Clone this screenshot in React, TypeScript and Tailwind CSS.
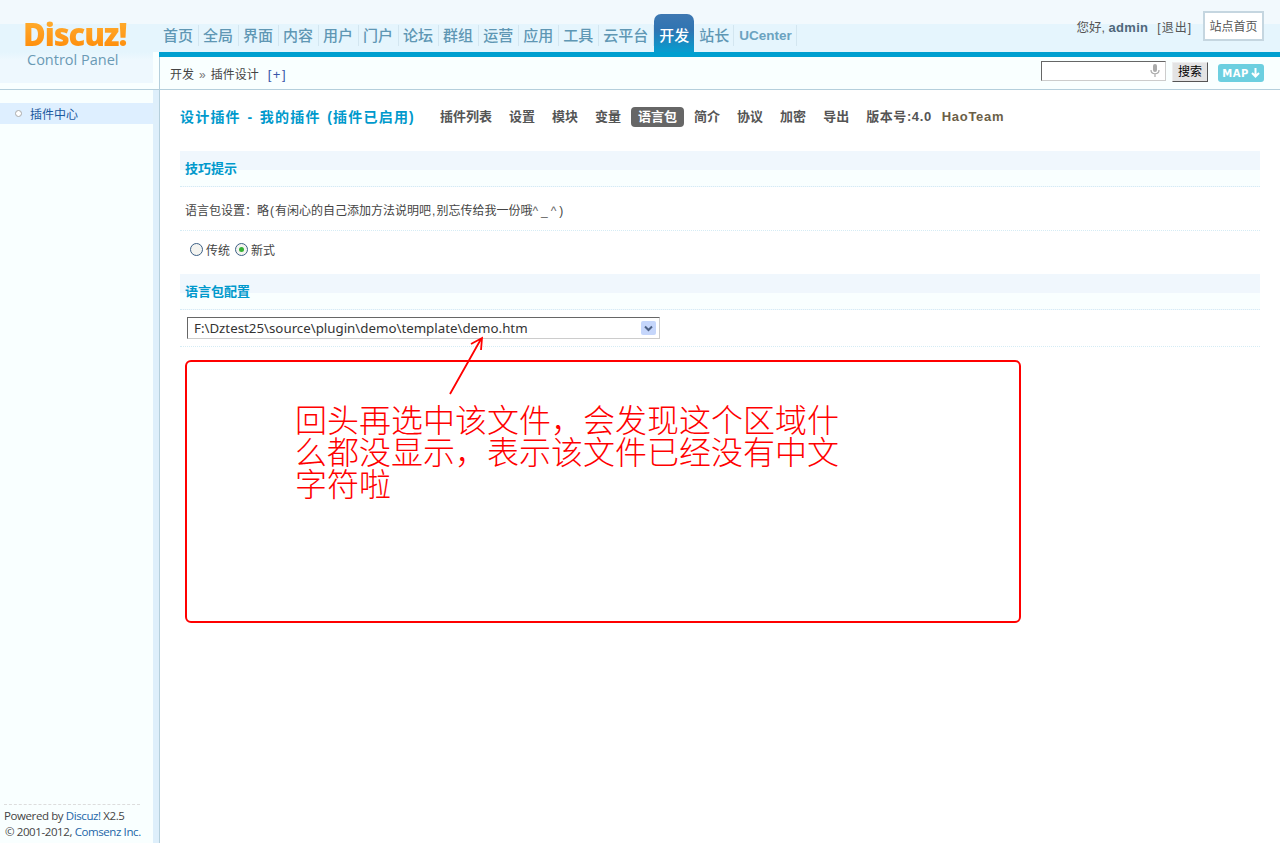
/**
 * Discuz! X2.5 admin panel: plugin designer, language pack page
 */
const navItems = ['首页', '全局', '界面', '内容', '用户', '门户', '论坛', '群组', '运营', '应用', '工具', '云平台'];
const subItems = ['插件列表', '设置', '模块', '变量'];
const subItemsAfter = ['简介', '协议', '加密', '导出'];

const base = "font-['Liberation_Sans','Noto_Sans_CJK_SC',sans-serif]";

function SectionHead({ title }: { title: string }) {
  return (
    <div className="h-[36px] border-b border-dotted border-[#d5ecf5] bg-[linear-gradient(#f0f7fd_0,#f0f7fd_19px,#f9ffff_19px)] pl-[5px] pt-[9px] text-[13px] leading-[18px] font-bold text-[#0099cc]">
      {title}
    </div>
  );
}

function Radio({ checked, label }: { checked?: boolean; label: string }) {
  return (
    <span className="flex items-center gap-[3px]">
      <span className="flex h-[13px] w-[13px] items-center justify-center rounded-full border border-[#3c5f85] bg-[#f4f4f0]">
        {checked && <span className="h-[5px] w-[5px] rounded-full bg-[#35b035]" />}
      </span>
      <span className="mt-[3px] text-[12px] text-[#444]">{label}</span>
    </span>
  );
}

export default function App() {
  return (
    <div className={`${base} relative flex h-[843px] w-[1280px] flex-col overflow-hidden bg-white text-[12px] text-[#444]`}>
      {/* Top */}
      <div className="flex h-[90px] shrink-0 border-b border-[#b5cfdc] bg-[#f9ffff]">
        <div className="h-[83px] w-[153px] shrink-0 bg-[linear-gradient(#f2f9fd_0,#f2f9fd_24px,#e5f5fd_24px,#e5f5fd_52px,#eef8fe_60px,#eef8fe)] pt-[17px] pl-[23px]">
          <div className="bg-gradient-to-b from-[#ffb030] to-[#ff8a00] bg-clip-text text-[31px] leading-[34px] font-extrabold tracking-[-1.1px] text-transparent font-['Open_Sans',sans-serif]">
            Discuz!
          </div>
          <div className="pl-[4px] text-[14.5px] leading-[17px] text-[#6a9ab5] font-['Open_Sans',sans-serif]">Control Panel</div>
        </div>
        <div className="flex min-w-0 flex-1 flex-col">
          <div className="flex h-[52px] shrink-0 bg-[linear-gradient(#f2f9fd_0,#f2f9fd_24px,#e5f5fd_24px)]">
            <div className="w-[6px] shrink-0" />
            <nav className="flex h-[57px] items-start">
              {navItems.map((item) => (
                <a key={item} className="mt-[25px] border-r border-[#d3e6f0] pr-[5px] pl-[4px] text-[15px] leading-[21px] font-medium text-[#5f97b4]">
                  {item}
                </a>
              ))}
              <a className="mt-[14px] h-[43px] w-[40px] rounded-t-[7px] bg-[linear-gradient(#3e78b2_0,#2f74b2_16px,#0a9acd_36px,#0a9acd_38px,#4fb4d8_43px)] pt-[11px] text-center text-[15px] leading-[21px] font-medium text-white">
                开发
              </a>
              <a className="mt-[25px] border-r border-[#d3e6f0] pr-[4px] pl-[5px] text-[15px] leading-[21px] font-medium text-[#5f97b4]">站长</a>
              <a className="mt-[25px] border-r border-[#d3e6f0] pr-[4px] pl-[5px] text-[13.5px] leading-[21px] font-bold text-[#6ba3c0]">UCenter</a>
            </nav>
            <div className="ml-auto flex items-start pt-[11px] pr-[16px]">
              <span className="mt-[8px] text-[12.5px] leading-[18px] text-[#555]">
                您好, <b className="text-[13px] tracking-[0.3px] text-[#50677a]">admin</b>
              </span>
              <span className="mt-[8px] ml-[9px] text-[12px] leading-[18px] tracking-[1px] text-[#555]">[退出]</span>
              <a className="ml-[11px] flex h-[30px] w-[61px] items-center justify-center border-2 border-[#c5d6e0] bg-white pt-[1px] text-[12px] text-[#555]">站点首页</a>
            </div>
          </div>
          <div className="flex min-h-0 flex-1 flex-col">
            <div className="ml-[6px] h-[5px] shrink-0 bg-[#009fd0]" />
            <div className="ml-[6px] flex flex-1 border-l border-[#b5cfdc]">
              <div className="flex items-center pt-[4px] pl-[10px] text-[12px] text-[#444]">
                <span>开发</span>
                <span className="mx-[5px] text-[#777]">»</span>
                <span>插件设计</span>
                <span className="ml-[9px] text-[13px] tracking-[1.5px] text-[#3a56a8]">[+]</span>
              </div>
              <div className="ml-auto flex items-start pt-[4px] pr-[16px]">
                <div className="flex h-[20px] w-[125px] items-center justify-end border border-t-[#666] border-r-[#ccc] border-b-[#ccc] border-l-[#666] bg-white pr-[5px]">
                  <svg width="10" height="14" viewBox="0 0 10 14" fill="none">
                    <rect x="3" y="0" width="4" height="8" rx="2" fill="#aaa" />
                    <path d="M1 6c0 5 8 5 8 0M5 10v3" stroke="#aaa" strokeWidth="1.2" />
                  </svg>
                </div>
                <button className="mt-[1px] ml-[6px] h-[20px] w-[36px] border border-t-[#eee] border-r-[#555] border-b-[#555] border-l-[#eee] bg-[#e3e3e3] text-[12px] leading-[17px] text-black">
                  搜索
                </button>
                <div className="mt-[3px] ml-[10px] flex h-[18px] w-[46px] items-center justify-center gap-[2px] rounded-[3px] bg-[#6ccfe0] text-[10px] font-bold tracking-[0.5px] text-white font-['DejaVu_Sans',sans-serif]">
                  MAP
                  <svg width="9" height="10" viewBox="0 0 9 10" fill="none">
                    <path d="M4.5 0v8M1 5l3.5 3.5L8 5" stroke="#fff" strokeWidth="2" />
                  </svg>
                </div>
              </div>
            </div>
          </div>
        </div>
      </div>

      {/* Body */}
      <div className="flex min-h-0 flex-1">
        <aside className="flex w-[153px] shrink-0 flex-col bg-[#f9ffff] pt-[13px]">
          <div className="flex h-[21px] items-center bg-[#deefff] pl-[15px] text-[#1c5a9e]">
            <span className="h-[7px] w-[7px] rounded-full border border-[#aaa] bg-white" />
            <span className="mt-[2px] ml-[8px]">插件中心</span>
          </div>
          <div className="mt-auto px-[4px] pb-[3px] text-[11.5px] leading-[16px] text-[#444] font-['Open_Sans','Liberation_Sans',sans-serif]">
            <div className="mr-[9px] mb-[3px] border-t border-dashed border-[#ddd]" />
            <div className="tracking-[-0.4px]">
              Powered by <span className="text-[#2366a8]">Discuz!</span> X2.5
            </div>
            <div className="pl-[1px] tracking-[-0.4px]">
              © 2001-2012, <span className="text-[#2366a8]">Comsenz Inc.</span>
            </div>
          </div>
        </aside>
        <div className="w-[6px] shrink-0 bg-[#deeffb]" />
        <main className="min-w-0 flex-1 border-l border-[#b5cfdc] pr-[20px] pl-[20px]">
          {/* Plugin menu */}
          <div className="flex h-[61px] items-center pb-[7px]">
            <h1 className="w-[260px] whitespace-nowrap text-[14px] font-bold tracking-[1.2px] [word-spacing:1.5px] text-[#0099cc]">设计插件 - 我的插件 (插件已启用)</h1>
            <div className="flex items-center gap-[17px] text-[13px] font-bold text-[#555]">
              {subItems.map((s) => (
                <span key={s}>{s}</span>
              ))}
              <span className="-mx-[7px] flex h-[20px] items-center rounded-[4px] bg-[#666] px-[7px] text-white">语言包</span>
              {subItemsAfter.map((s) => (
                <span key={s}>{s}</span>
              ))}
              <span className="tracking-[0.6px]">版本号:4.0</span>
              <span className="-ml-[7px] tracking-[0.7px] text-[#6b5f47]">HaoTeam</span>
            </div>
          </div>

          <SectionHead title="技巧提示" />
          <div className="flex h-[44px] items-center border-b border-dotted border-[#d5ecf5] pt-[5px] pl-[5px] text-[12px]">
            <span>
              语言包设置：略<span className="mx-[1px]">(</span>有闲心的自己添加方法说明吧<span className="mx-[1px]">,</span>别忘传给我一份哦
              <span className="tracking-[3px] text-[#666]">^_^</span>)
            </span>
          </div>
          <div className="flex h-[43px] items-center gap-[5px] pb-[6px] pl-[10px]">
            <Radio label="传统" />
            <Radio checked label="新式" />
          </div>

          <SectionHead title="语言包配置" />
          <div className="h-[37px] border-b border-dotted border-[#d5ecf5] pt-[7px] pl-[7px]">
            <div className="flex h-[22px] w-[473px] items-center border border-t-[#666] border-r-[#ccc] border-b-[#ccc] border-l-[#666] bg-white pr-[3px] pl-[6px] text-[13.3px] leading-none text-[#333] font-['Noto_Sans',sans-serif]">
              <span className="pt-[1px]">F:\Dztest25\source\plugin\demo\template\demo.htm</span>
              <span className="ml-auto flex h-[14px] w-[15px] items-center justify-center rounded-[2px] bg-[#c5d6fb]">
                <svg width="9" height="7" viewBox="0 0 9 7" fill="none">
                  <path d="M1 1.5l3.5 3.5L8 1.5" stroke="#4d6185" strokeWidth="2" />
                </svg>
              </span>
            </div>
          </div>
        </main>
      </div>

      {/* Red annotation drawn over the screenshot */}
      <svg className="absolute top-[335px] left-[445px]" width="45" height="62" viewBox="0 0 45 62" fill="none">
        <path d="M5 59L36 4M26 9l11-6-1 12" stroke="#ff0000" strokeWidth="1.8" />
      </svg>
      <div className="absolute top-[360px] left-[185px] h-[263px] w-[836px] rounded-[6px] border-2 border-[#ff0000]" />
      <p className="absolute top-[405px] left-[295px] w-[544px] text-[32px] leading-[32px] font-light text-[#ff0000] font-['Liberation_Serif','Noto_Sans_CJK_SC',serif]">
        回头再选中该文件，会发现这个区域什么都没显示，表示该文件已经没有中文字符啦
      </p>
    </div>
  );
}
